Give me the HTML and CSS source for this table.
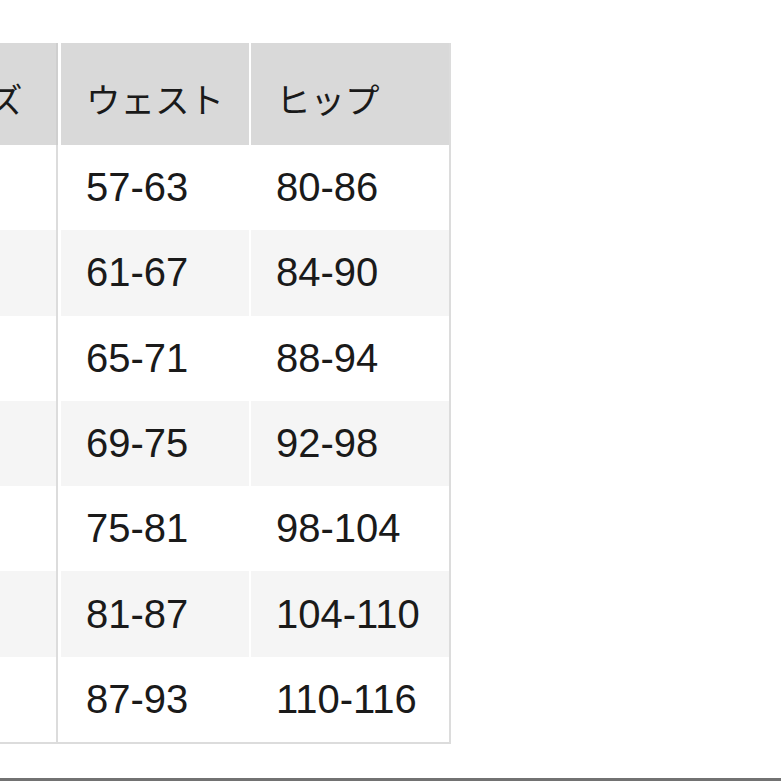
FILE: index.html
```html
<!DOCTYPE html>
<html lang="ja">
<head>
<meta charset="utf-8">
<title>サイズ表</title>
<link rel="stylesheet" href="styles.css">
</head>
<body>
<div class="page">
  <table class="size-table">
    <thead>
      <tr>
        <th class="col-size">サイズ</th>
        <th class="col-waist">ウェスト</th>
        <th class="col-hip">ヒップ</th>
      </tr>
    </thead>
    <tbody>
      <tr><td class="col-size"></td><td class="col-waist">57-63</td><td class="col-hip">80-86</td></tr>
      <tr><td class="col-size"></td><td class="col-waist">61-67</td><td class="col-hip">84-90</td></tr>
      <tr><td class="col-size"></td><td class="col-waist">65-71</td><td class="col-hip">88-94</td></tr>
      <tr><td class="col-size"></td><td class="col-waist">69-75</td><td class="col-hip">92-98</td></tr>
      <tr><td class="col-size"></td><td class="col-waist">75-81</td><td class="col-hip">98-104</td></tr>
      <tr><td class="col-size"></td><td class="col-waist">81-87</td><td class="col-hip">104-110</td></tr>
      <tr><td class="col-size"></td><td class="col-waist">87-93</td><td class="col-hip">110-116</td></tr>
    </tbody>
  </table>
  <div class="rule"></div>
</div>
</body>
</html>
```

FILE: styles.css
```css
html, body {
  margin: 0;
  padding: 0;
  background: #ffffff;
}

body {
  width: 781px;
  height: 781px;
  overflow: hidden;
  font-family: "Liberation Sans", "Noto Sans CJK JP", sans-serif;
  color: #1a1a1a;
}

.page {
  padding-top: 43px;
}

.size-table {
  margin-left: -111px;
  border-collapse: separate;
  border-spacing: 0;
  border-right: 2px solid #dcdcdc;
  border-bottom: 2px solid #dcdcdc;
  table-layout: fixed;
}

.size-table th,
.size-table td {
  box-sizing: border-box;
  text-align: left;
  vertical-align: middle;
  padding: 0 0 0 25px;
  white-space: nowrap;
}

.size-table th {
  height: 102px;
  background: #d9d9d9;
  font-family: "Noto Sans CJK JP", "Liberation Sans", sans-serif;
  font-weight: 400;
  font-size: 34.5px;
  padding-top: 8px;
}

.size-table th.col-size {
  padding-left: 31px;
  border-right-color: #cfcfcf;
}

.size-table td {
  height: 85.3px;
  background: #ffffff;
  font-size: 40px;
}

.size-table tbody tr:nth-child(even) td {
  background: #f5f5f5;
}

.col-size {
  width: 169px;
  border-right: 2px solid #dcdcdc;
}

.col-waist {
  width: 191px;
  border-left: 3px solid #ffffff;
}

.col-hip {
  width: 200px;
  border-left: 2px solid #ffffff;
}

.rule {
  margin-top: 34px;
  height: 3px;
  background: #727272;
}
```
